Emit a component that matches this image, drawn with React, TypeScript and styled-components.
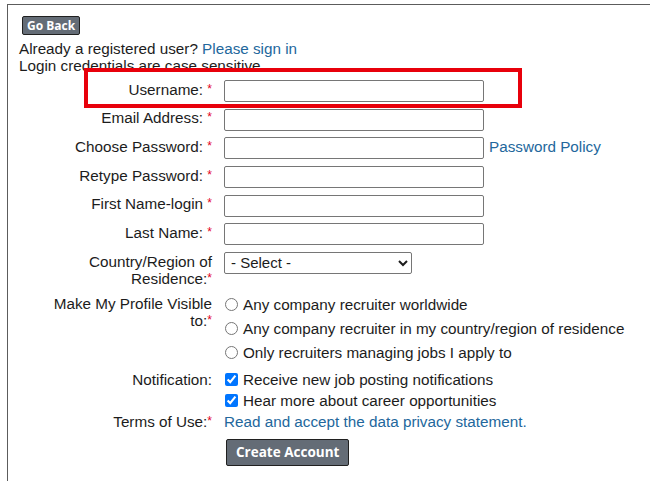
import React from 'react';
import styled, {createGlobalStyle} from 'styled-components';

const GlobalStyle = createGlobalStyle`
    html, body {
        margin: 0;
        background: #fff;
    }
    body {
        font-family: "Liberation Sans", Arial, sans-serif;
        font-size: 15.25px;
        color: #1c1c1c;
    }
`;

const Page = styled.div`
    position: relative;
    box-sizing: border-box;
    height: 100vh;
    padding: 4px 0 0 7px;
`;

const Panel = styled.div`
    box-sizing: border-box;
    height: 100%;
    border-top: 1px solid #5c5c5c;
    border-left: 1px solid #5c5c5c;
    padding: 11px 0 0 11px;
`;

const GrayButton = styled.button<{$size?: 'small' | 'large'}>`
    display: inline-flex;
    align-items: center;
    justify-content: center;
    box-sizing: border-box;
    margin: 0;
    margin-left: ${p => (p.$size === 'large' ? '2px' : '3px')};
    height: ${p => (p.$size === 'large' ? '27px' : '19px')};
    padding: ${p => (p.$size === 'large' ? '0 9px' : '0 4px')};
    font-family: "Open Sans", "Liberation Sans", sans-serif;
    font-weight: bold;
    font-size: ${p => (p.$size === 'large' ? '13.5px' : '12px')};
    color: #fff;
    background: #646c76;
    border: 1px solid #202020;
    border-radius: 2px;
    cursor: pointer;
`;

const Intro = styled.div`
    margin-top: 5px;
    line-height: 17px;
`;

const Link = styled.a<{$lift?: boolean}>`
    color: #23679c;
    text-decoration: none;
    cursor: pointer;
    padding-bottom: ${p => (p.$lift ? '4px' : '0')};
`;

const Form = styled.div`
    display: flex;
    flex-direction: column;
    margin-top: 3px;
`;

const FieldRow = styled.div<{$top?: boolean; $mt?: number; $h?: number}>`
    display: grid;
    grid-template-columns: 193px 1fr;
    column-gap: 12px;
    align-items: ${p => (p.$top ? 'start' : 'center')};
    margin-top: ${p => p.$mt ?? 0}px;
    min-height: ${p => p.$h ?? 0}px;
`;

const Label = styled.div<{$pt?: number; $pb?: number}>`
    text-align: right;
    line-height: 17px;
    padding-top: ${p => p.$pt ?? 0}px;
    padding-bottom: ${p => p.$pb ?? 0}px;
`;

const Req = styled.span`
    color: #e3001b;
    font-size: 12px;
    vertical-align: 2px;
`;

const Control = styled.div`
    display: flex;
    align-items: center;
    gap: 5px;
`;

const TextInput = styled.input`
    box-sizing: border-box;
    width: 260px;
    height: 22px;
    margin: 0;
    border: 1px solid #767676;
    border-radius: 2px;
    background: #fff;
`;

const Select = styled.select`
    box-sizing: border-box;
    width: 188px;
    height: 22px;
    margin: 0;
    padding: 0 2px;
    font-family: "Liberation Sans", Arial, sans-serif;
    font-size: 15px;
    color: #1c1c1c;
    border: 1px solid #767676;
    border-radius: 2px;
    background: #fff;
`;

const OptionList = styled.div`
    display: flex;
    flex-direction: column;
`;

const Option = styled.label<{$h: number}>`
    display: flex;
    align-items: center;
    height: ${p => p.$h}px;
`;

const Tick = styled.input`
    width: 13px;
    height: 13px;
    margin: 0 5px 0 1px;
    accent-color: #0075ff;
`;

const RedFrame = styled.div`
    position: absolute;
    left: 84px;
    top: 68px;
    width: 438px;
    height: 40px;
    box-sizing: border-box;
    border: 4px solid #e8000b;
    pointer-events: none;
`;

const textFields = [
    {label: 'Username:', sep: ' '},
    {label: 'Email Address:', sep: ' '},
    {label: 'Choose Password:', sep: ' ', extra: 'Password Policy'},
    {label: 'Retype Password:', sep: ' '},
    {label: 'First Name-login', sep: ' '},
    {label: 'Last Name:', sep: ' '},
];

const visibility = [
    'Any company recruiter worldwide',
    'Any company recruiter in my country/region of residence',
    'Only recruiters managing jobs I apply to',
];

const App = () => {
    return (
        <Page>
            <GlobalStyle />
            <Panel>
                <GrayButton $size="small">Go Back</GrayButton>
                <Intro>
                    Already a registered user? <Link>Please sign in</Link>
                    <br />
                    Login credentials are case sensitive.
                </Intro>
                <Form>
                    {textFields.map(f => (
                        <FieldRow key={f.label} $h={28.6}>
                            <Label $pb={4}>{f.label}{f.sep}<Req>*</Req></Label>
                            <Control>
                                <TextInput type={f.label.includes('Password') ? 'password' : 'text'} />
                                {f.extra && <Link $lift>{f.extra}</Link>}
                            </Control>
                        </FieldRow>
                    ))}
                    <FieldRow $top $mt={3}>
                        <Label $pt={1}>Country/Region of<br />Residence:<Req>*</Req></Label>
                        <Control>
                            <Select defaultValue="">
                                <option value="">- Select -</option>
                            </Select>
                        </Control>
                    </FieldRow>
                    <FieldRow $top $mt={6}>
                        <Label $pt={2}>Make My Profile Visible<br />to:<Req>*</Req></Label>
                        <OptionList>
                            {visibility.map(v => (
                                <Option key={v} $h={24}>
                                    <Tick type="radio" name="visible" />
                                    {v}
                                </Option>
                            ))}
                        </OptionList>
                    </FieldRow>
                    <FieldRow $top $mt={4}>
                        <Label $pt={2}>Notification:</Label>
                        <OptionList>
                            <Option $h={21}>
                                <Tick type="checkbox" defaultChecked />
                                Receive new job posting notifications
                            </Option>
                            <Option $h={21}>
                                <Tick type="checkbox" defaultChecked />
                                Hear more about career opportunities
                            </Option>
                        </OptionList>
                    </FieldRow>
                    <FieldRow $h={22}>
                        <Label>Terms of Use:<Req>*</Req></Label>
                        <Control>
                            <Link>Read and accept the data privacy statement.</Link>
                        </Control>
                    </FieldRow>
                    <FieldRow $mt={6}>
                        <span />
                        <Control>
                            <GrayButton $size="large">Create Account</GrayButton>
                        </Control>
                    </FieldRow>
                </Form>
            </Panel>
            <RedFrame />
        </Page>
    );
}

export default App;
